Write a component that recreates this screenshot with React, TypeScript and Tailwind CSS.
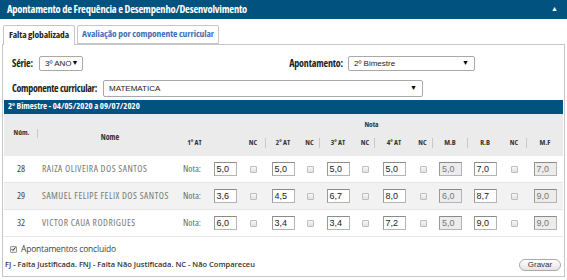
import React from "react";

const cols =
  "grid grid-cols-[36px_140px_29px_32px_25px_34px_20px_36px_19px_38px_20px_35px_34px_25px_36px]";

function Box({ v, disabled }: { v: string; disabled?: boolean }) {
  return (
    <div
      className={
        "w-[23px] h-[14px] border border-[#b4b4b4] border-t-[#8a8a8a] border-l-[#9a9a9a] pl-[2px] flex items-center text-[9px] leading-none text-[#222] " +
        (disabled ? "bg-[#ececec] text-[#777]" : "bg-white")
      }
      style={{ fontFamily: "'Liberation Sans', Arial, sans-serif" }}
    >
      {v}
    </div>
  );
}

function Chk() {
  return (
    <div className="w-[7px] h-[7px] rounded-[1px] border border-[#bdbdbd] bg-gradient-to-b from-[#f7f7f7] to-[#e2e2e2]" />
  );
}

function HLabel({ t, sep }: { t: string; sep?: boolean }) {
  return (
    <div
      className={
        "self-start mt-[4px] h-[10px] flex items-center justify-center text-[7.5px] font-bold text-[#333] whitespace-nowrap " +
        (sep ? "border-r border-[#c8c8c8]" : "")
      }
    >
      {t}
    </div>
  );
}

type Row = { n: string; name: string; v: string[]; bg: string };

const rows: Row[] = [
  { n: "28", name: "RAIZA OLIVEIRA DOS SANTOS", v: ["5,0", "5,0", "5,0", "5,0", "5,0", "7,0", "7,0"], bg: "bg-white" },
  { n: "29", name: "SAMUEL FELIPE FELIX DOS SANTOS", v: ["3,6", "4,5", "6,7", "8,0", "6,0", "8,7", "9,0"], bg: "bg-[#f2f2f2]" },
  { n: "32", name: "VICTOR CAUA RODRIGUES", v: ["6,0", "3,4", "3,4", "7,2", "5,0", "9,0", "9,0"], bg: "bg-white" },
];

function Select({ w, text }: { w: string; text: string }) {
  return (
    <div
      className={
        w +
        " h-[15px] border border-[#a9a9a9] rounded-[2px] bg-white flex items-center justify-between pl-[5px] pr-[5px] text-[8px] text-[#222] whitespace-nowrap shrink-0"
      }
      style={{ fontFamily: "'Liberation Sans', Arial, sans-serif", fontStretch: "100%" }}
    >
      <span>{text}</span>
      <span className="text-[7px] text-black">▼</span>
    </div>
  );
}

const st = (p: number) => ({ fontStretch: `${p}%` });

export default function App() {
  return (
    <div
      className="w-[567px] h-[280px] bg-white overflow-hidden relative whitespace-nowrap"
      style={{ fontFamily: "'Open Sans', 'Liberation Sans', sans-serif", fontStretch: "75%" }}
    >
      <div className="h-[19px] bg-[#02527f] flex items-center justify-between pl-[7px] pr-[9px] text-white">
        <span className="text-[10.5px] font-bold tracking-[-0.2px]">
          Apontamento de Frequência e Desempenho/Desenvolvimento
        </span>
        <span className="text-[7px]">▲</span>
      </div>

      <div className="pl-[2px] pr-[2px] pt-[6px]">
        <div className="flex h-[19px] pl-[1px] gap-[2px] relative z-10">
          <div className="w-[72px] h-[20px] border border-b-0 border-[#c6c6c6] rounded-t-[2px] bg-white flex items-center justify-center text-[9.5px] font-bold text-[#222] tracking-[-0.1px]">
            Falta globalizada
          </div>
          <div className="w-[142px] h-[19px] border border-[#c6c6c6] rounded-t-[2px] bg-white flex items-center justify-center text-[9.5px] font-bold text-[#3d70b4] tracking-[-0.1px]">
            Avaliação por componente curricular
          </div>
        </div>
        <div className="h-[233px] border border-[#c6c6c6] flex flex-col">
          <div className="flex items-center h-[15px] mt-[11px] pl-[9px]">
            <span className="text-[10px] font-bold text-[#222] w-[27px] tracking-[-0.2px]">Série:</span>
            <Select w="w-[44px]" text="3º ANO" />
            <span className="ml-auto text-[10px] font-bold text-[#222] tracking-[-0.15px]">Apontamento:</span>
            <div className="ml-[5px] mr-[89px]">
              <Select w="w-[127px]" text="2º Bimestre" />
            </div>
          </div>
          <div className="flex items-center h-[17px] mt-[9px] pl-[9px]">
            <span className="text-[10px] font-bold text-[#222] w-[91px] tracking-[-0.3px]">Componente curricular:</span>
            <Select w="w-[320px] h-[17px]" text="MATEMATICA" />
          </div>

          <div className="mx-[1px] mt-[3px]">
            <div className="h-[14px] bg-[#02527f] flex items-center pl-[4px] text-white text-[8.75px] font-bold">
              2º Bimestre - 04/05/2020 a 09/07/2020
            </div>
            <div className={cols + " grid-rows-[20px_22px] bg-[#ebebeb]"}>
              <div className="row-span-2 self-center mb-[4px] ml-[8px] mr-[2px] h-[9px] flex items-center justify-center border-r border-[#c8c8c8] text-[7.5px] font-bold text-[#333]">
                <span className="mr-[6px]">Núm.</span>
              </div>
              <div className="row-span-2 self-center mt-[4px] flex justify-center text-[8px] font-bold text-[#333]">
                Nome
              </div>
              <div className="col-span-13 flex items-center justify-center pt-[1px] text-[7.5px] font-bold text-[#333]">
                Nota
              </div>
              <div className="col-start-4 row-start-2" />
              <HLabel t="1º AT" />
              <HLabel t="NC" sep />
              <HLabel t="2º AT" />
              <HLabel t="NC" sep />
              <HLabel t="3º AT" />
              <HLabel t="NC" sep />
              <HLabel t="4º AT" />
              <HLabel t="NC" sep />
              <HLabel t="M.B" sep />
              <HLabel t="R.B" />
              <HLabel t="NC" sep />
              <HLabel t="M.F" />
            </div>
            {rows.map((r) => (
              <div key={r.n} className={cols + " h-[27px] items-center border-b border-[#e6e6e6] " + r.bg}>
                <div className="pl-[13px] text-[9.5px] text-[#444]">{r.n}</div>
                <div className="pl-[2px] text-[9.5px] text-[#777] tracking-[0.5px]">{r.name}</div>
                <div className="pl-[3px] text-[9.5px] text-[#666]">Nota:</div>
                <div className="flex justify-center"><Box v={r.v[0]} /></div>
                <div className="flex justify-center"><Chk /></div>
                <div className="flex justify-center"><Box v={r.v[1]} /></div>
                <div className="flex justify-center"><Chk /></div>
                <div className="flex justify-center"><Box v={r.v[2]} /></div>
                <div className="flex justify-center"><Chk /></div>
                <div className="flex justify-center"><Box v={r.v[3]} /></div>
                <div className="flex justify-center"><Chk /></div>
                <div className="flex justify-center"><Box v={r.v[4]} disabled /></div>
                <div className="flex justify-center"><Box v={r.v[5]} /></div>
                <div className="flex justify-center"><Chk /></div>
                <div className="flex justify-center"><Box v={r.v[6]} disabled /></div>
              </div>
            ))}
          </div>

          <div className="flex items-center mt-[6px] pl-[7px] gap-[4px]">
            <div className="w-[7px] h-[7px] rounded-[1px] border border-[#9a9a9a] bg-[#eee] flex items-center justify-center">
              <svg width="6" height="6" viewBox="0 0 6 6">
                <path d="M0.8 3.2 L2.4 4.8 L5.2 1" stroke="#333" strokeWidth="1.2" fill="none" />
              </svg>
            </div>
            <span className="text-[8.5px] text-[#444] tracking-[-0.2px]" style={st(100)}>Apontamentos concluido</span>
          </div>
          <div className="flex items-center justify-between pl-[2px] pr-[3px] mt-[3px]">
            <span className="text-[7.5px] font-semibold text-[#333]" style={st(100)}>
              FJ - Falta Justificada. FNJ - Falta Não Justificada. NC - Não Compareceu
            </span>
            <button
              className="w-[42px] h-[12px] rounded-full border border-[#aaa] bg-gradient-to-b from-white to-[#e4e4e4] text-[8px] text-[#333] leading-none"
              style={{ fontFamily: "'Liberation Sans', Arial, sans-serif", fontStretch: "100%" }}
            >
              Gravar
            </button>
          </div>
        </div>
      </div>
    </div>
  );
}
